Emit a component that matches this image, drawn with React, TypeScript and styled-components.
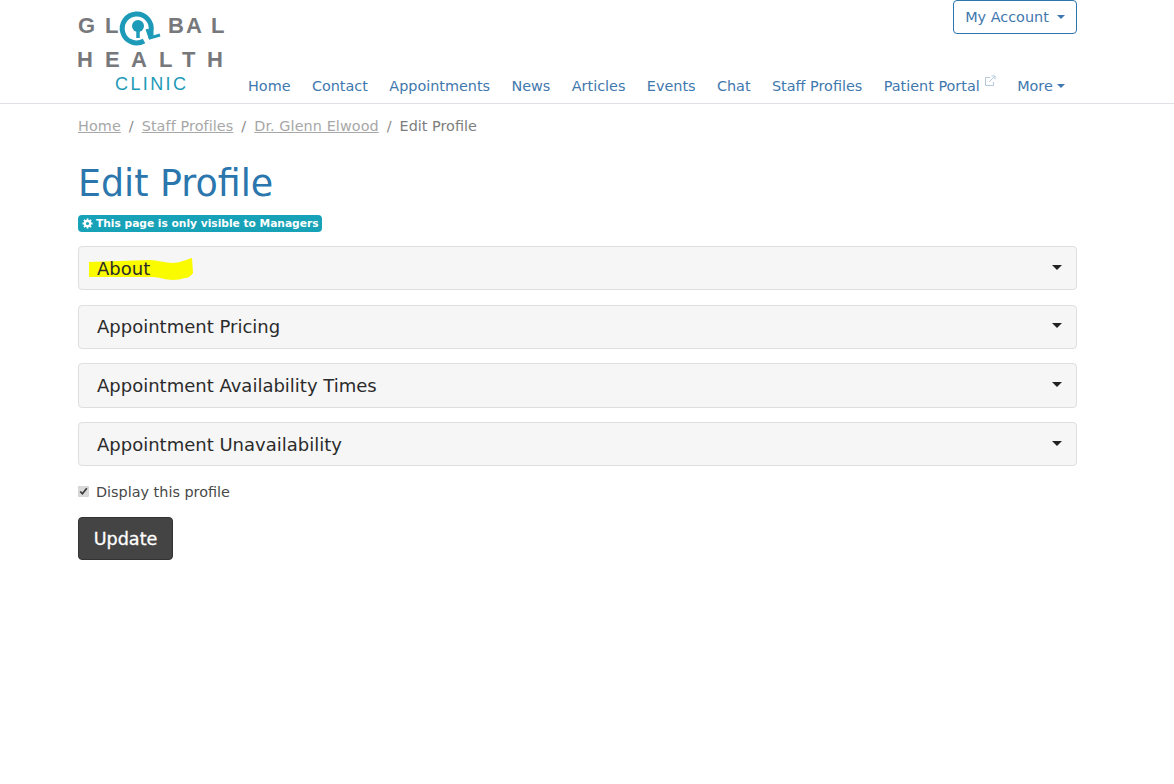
import styled, { createGlobalStyle } from 'styled-components';

const GlobalStyle = createGlobalStyle`
  html, body {
    margin: 0;
    padding: 0;
    background: #fff;
    font-family: "DejaVu Sans", Verdana, sans-serif;
    color: #333;
  }
`;

const Header = styled.header`
  height: 103px;
  border-bottom: 1px solid #dee2e6;
`;

const HeaderInner = styled.div`
  width: 999px;
  height: 103px;
  margin-left: 78px;
  display: flex;
`;

const LogoBox = styled.div`
  width: 149px;
  flex: none;
`;

const HeaderMain = styled.div`
  flex: 1;
  display: flex;
  flex-direction: column;
  justify-content: space-between;
  align-items: stretch;
`;

const AccountRow = styled.div`
  display: flex;
  justify-content: flex-end;
`;

const AccountButton = styled.button`
  width: 124px;
  height: 34px;
  padding: 0;
  background: #fff;
  border: 1px solid #2a76ad;
  border-radius: 4px;
  color: #3f78ae;
  font-family: inherit;
  font-size: 14.4px;
  display: flex;
  align-items: center;
  justify-content: center;
  gap: 8px;
`;

const Caret = styled.span<{ $size?: number }>`
  display: inline-block;
  width: 0;
  height: 0;
  border-left: ${(p) => p.$size ?? 4}px solid transparent;
  border-right: ${(p) => p.$size ?? 4}px solid transparent;
  border-top: ${(p) => p.$size ?? 4}px solid currentColor;
`;

const Nav = styled.nav`
  display: flex;
  align-items: center;
  height: 37px;
  padding-left: 21px;
  padding-top: 2px;
  box-sizing: border-box;
  gap: 21.4px;
`;

const NavLink = styled.a`
  color: #3f78ae;
  font-size: 14.4px;
  text-decoration: none;
  white-space: nowrap;
  display: flex;
  align-items: center;
`;

const External = styled.svg`
  margin-left: 4px;
  margin-top: -9px;
`;

const MoreCaret = styled(Caret)`
  margin-left: 4px;
`;

const Main = styled.main`
  width: 999px;
  margin-left: 78px;
`;

const Crumbs = styled.ol`
  list-style: none;
  margin: 0;
  padding: 12px 0 0;
  height: 20px;
  display: flex;
  align-items: center;
  font-size: 14.4px;
  color: #7d7d7d;
`;

const Crumb = styled.li`
  display: flex;
  align-items: center;
`;

const CrumbLink = styled.a`
  color: #a7a7a7;
  text-decoration: underline;
  letter-spacing: 0.08px;
`;

const Sep = styled.span`
  color: #8a8a8a;
  padding: 0 8px;
`;

const Title = styled.h1`
  margin: 26px 0 0;
  font-size: 36.4px;
  font-weight: 400;
  line-height: 44px;
  color: #2a76ad;
`;

const Badge = styled.div`
  display: flex;
  align-items: center;
  gap: 3px;
  margin-top: 9px;
  height: 17px;
  width: 244px;
  box-sizing: border-box;
  padding-left: 4px;
  border-radius: 4px;
  background: #17a2b8;
  color: #fff;
  font-size: 10.65px;
  font-weight: 700;
  white-space: nowrap;
`;

const BadgeIcon = styled.svg`
  flex: none;
`;

const Panels = styled.div`
  margin-top: 14.3px;
  display: flex;
  flex-direction: column;
  gap: 14.4px;
`;

const Panel = styled.div`
  height: 44.2px;
  box-sizing: border-box;
  padding: 0 14px 0 18px;
  display: flex;
  align-items: center;
  justify-content: space-between;
  background: #f6f6f6;
  border: 1px solid #dfdfdf;
  border-radius: 4px;
  font-size: 18px;
  color: #2b2b2b;
`;

const PanelLabel = styled.span`
  position: relative;
`;

const PanelText = styled.span`
  position: relative;
`;

const Highlight = styled.svg`
  position: absolute;
  left: -10px;
  top: -6px;
`;

const PanelCaret = styled(Caret)`
  color: #222;
  margin-top: -2px;
`;

const CheckRow = styled.label`
  display: flex;
  align-items: center;
  margin-top: 15.7px;
  height: 20px;
  font-size: 14.4px;
  color: #484848;
`;

const CheckBox = styled.input`
  width: 11px;
  height: 11px;
  margin: 0 7px 0 0;
  accent-color: #d9d9d9;
`;

const UpdateButton = styled.button`
  display: block;
  margin-top: 15px;
  width: 95px;
  height: 43px;
  padding: 1px 0 0;
  background: #444;
  border: 1px solid #333;
  border-radius: 4px;
  color: #fff;
  font-family: inherit;
  font-size: 17.6px;
  -webkit-text-stroke: 0.3px #fff;
`;

function Logo() {
  const grey = '#77787b';
  const teal = '#1d9ab8';
  const letters = { fontFamily: '"Liberation Sans", sans-serif', fontWeight: 700, fontSize: 22, fill: grey };
  return (
    <svg width="149" height="100" viewBox="0 0 149 100">
      <text x="0" y="33" {...letters}>G</text>
      <text x="27" y="33" {...letters}>L</text>
      <text x="90" y="33" {...letters}>B</text>
      <text x="108" y="33" {...letters}>A</text>
      <text x="133" y="33" {...letters}>L</text>
      <path d="M66 41 A14.5 14.5 0 1 1 73 31 L73 38" fill="none" stroke={teal} strokeWidth="5" />
      <circle cx="60" cy="26" r="6" fill={teal} />
      <path d="M60 28 L60 38" stroke={teal} strokeWidth="3.5" />
      <path d="M69 29 L72 38 L82 35" fill="none" stroke={teal} strokeWidth="3" />
      <text x="-1" y="67" {...letters}>H</text>
      <text x="27" y="67" {...letters}>E</text>
      <text x="53" y="67" {...letters}>A</text>
      <text x="81" y="67" {...letters}>L</text>
      <text x="104" y="67" {...letters}>T</text>
      <text x="129" y="67" {...letters}>H</text>
      <text x="37" y="90" fontFamily='"Liberation Sans", sans-serif' fontSize="18" letterSpacing="2.4" fill={teal}>CLINIC</text>
    </svg>
  );
}

const navItems = ['Home', 'Contact', 'Appointments', 'News', 'Articles', 'Events', 'Chat', 'Staff Profiles'];
const panels = ['About', 'Appointment Pricing', 'Appointment Availability Times', 'Appointment Unavailability'];

export default function App() {
  return (
    <>
      <GlobalStyle />
      <Header>
        <HeaderInner>
          <LogoBox>
            <Logo />
          </LogoBox>
          <HeaderMain>
            <AccountRow>
              <AccountButton>
                My Account <Caret />
              </AccountButton>
            </AccountRow>
            <Nav>
              {navItems.map((item) => (
                <NavLink key={item}>{item}</NavLink>
              ))}
              <NavLink>
                Patient Portal
                <External width="12" height="12" viewBox="0 0 12 12" fill="none" stroke="#b5c9dc" strokeWidth="1">
                  <path d="M9.5 7v3.5h-8v-8H6" />
                  <path d="M5 7l5.5-5.5M7.5 1h3.5v3.5" />
                </External>
              </NavLink>
              <NavLink>
                More
                <MoreCaret />
              </NavLink>
            </Nav>
          </HeaderMain>
        </HeaderInner>
      </Header>
      <Main>
        <Crumbs>
          <Crumb>
            <CrumbLink>Home</CrumbLink>
            <Sep>/</Sep>
          </Crumb>
          <Crumb>
            <CrumbLink>Staff Profiles</CrumbLink>
            <Sep>/</Sep>
          </Crumb>
          <Crumb>
            <CrumbLink>Dr. Glenn Elwood</CrumbLink>
            <Sep>/</Sep>
          </Crumb>
          <Crumb>Edit Profile</Crumb>
        </Crumbs>
        <Title>Edit Profile</Title>
        <Badge>
          <BadgeIcon width="11" height="11" viewBox="0 0 12 12">
            <path d="M6 .5v11M.5 6h11M2.1 2.1l7.8 7.8M9.9 2.1l-7.8 7.8" stroke="#fff" strokeWidth="2" />
            <circle cx="6" cy="6" r="4" fill="#fff" />
            <circle cx="6" cy="6" r="1.7" fill="#17a2b8" />
          </BadgeIcon>
          This page is only visible to Managers
        </Badge>
        <Panels>
          {panels.map((panel, i) => (
            <Panel key={panel}>
              <PanelLabel>
                {i === 0 && (
                  <Highlight width="108" height="30" viewBox="0 0 108 30">
                    <path
                      d="M2 10 L63 8 C70 8 78 11 86 11 C92 11 98 8 105 6 L106 21 C104 24 101 26 98 26 C94 27 90 28 86 28 C78 28 72 25 66 25 L2 25 Z"
                      fill="#fbfb00"
                    />
                  </Highlight>
                )}
                <PanelText>{panel}</PanelText>
              </PanelLabel>
              <PanelCaret $size={5} />
            </Panel>
          ))}
        </Panels>
        <CheckRow>
          <CheckBox type="checkbox" defaultChecked />
          Display this profile
        </CheckRow>
        <UpdateButton>Update</UpdateButton>
      </Main>
    </>
  );
}
